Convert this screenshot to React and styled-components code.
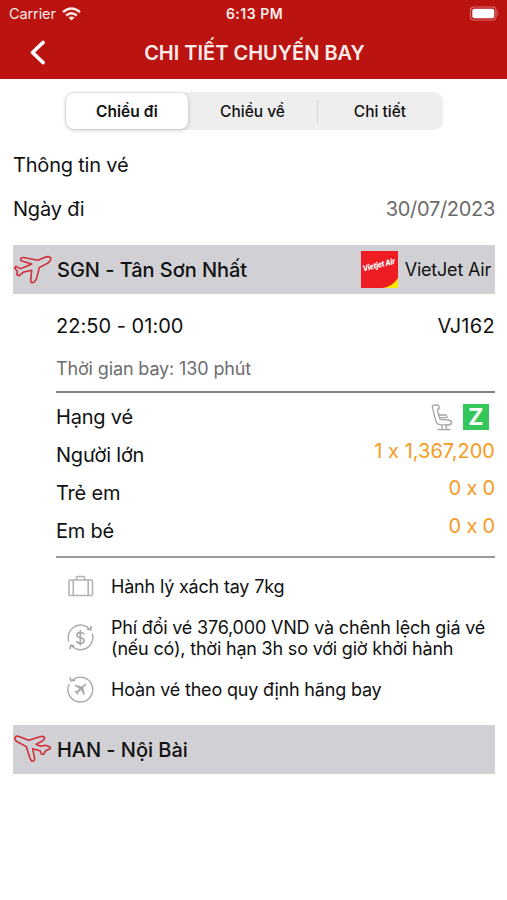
import styled, { createGlobalStyle } from "styled-components";
import { useState } from "react";

const tabs = ["Chiều đi", "Chiều về", "Chi tiết"];

const passengers = [
    { label: "Người lớn", price: "1 x 1,367,200", space: 0.02 },
    { label: "Trẻ em", price: "0 x 0", space: -0.2 },
    { label: "Em bé", price: "0 x 0", space: -0.2 },
];

export default function App(){
    const [tab, setTab] = useState(0);

    return(
    <>
        <GlobalStyle/>
        <Header>
            <StatusBar>
                <Carrier>Carrier <WifiIcon/></Carrier>
                <Clock>6:13 PM</Clock>
                <BatteryIcon/>
            </StatusBar>
            <NavBar>
                <Back aria-label="Quay lại"><BackIcon/></Back>
                <Title>CHI TIẾT CHUYẾN BAY</Title>
            </NavBar>
        </Header>
        <Tabs>
            {tabs.map((name, i) => (
                <Tab key={name} $active={tab === i} $line={tab === 0 && i === 2} onClick={() => setTab(i)}>{name}</Tab>
            ))}
        </Tabs>
        <Content>
            <Section><Text>Thông tin vé</Text></Section>
            <DateRow>
                <Text>Ngày đi</Text>
                <DateText $space={-0.3}>30/07/2023</DateText>
            </DateRow>

            <Airport>
                <DepartIcon/>
                <AirportName>SGN - Tân Sơn Nhất</AirportName>
                <Airline>
                    <VietJetLogo/>
                    <span>VietJet Air</span>
                </Airline>
            </Airport>

            <Flight>
                <TimeRow>
                    <Text $space={0.03}>22:50 - 01:00</Text>
                    <Text $space={0.3}>VJ162</Text>
                </TimeRow>
                <Duration>Thời gian bay: 130 phút</Duration>
                <Fares>
                    <FareRow>
                        <Text>Hạng vé</Text>
                        <Seat>
                            <SeatIcon/>
                            <SeatClass>Z</SeatClass>
                        </Seat>
                    </FareRow>
                    {passengers.map((p) => (
                        <FareRow key={p.label}>
                            <Text>{p.label}</Text>
                            <Price $space={p.space}>{p.price}</Price>
                        </FareRow>
                    ))}
                </Fares>
                <Conditions>
                    <Condition $height={40}>
                        <BagIcon/>
                        <p>Hành lý xách tay 7kg</p>
                    </Condition>
                    <Condition $height={62}>
                        <FeeIcon/>
                        <p>Phí đổi vé 376,000 VND và chênh lệch giá vé<br/>(nếu có), thời hạn 3h so với giờ khởi hành</p>
                    </Condition>
                    <Condition $height={42}>
                        <RefundIcon/>
                        <p>Hoàn vé theo quy định hãng bay</p>
                    </Condition>
                </Conditions>
            </Flight>

            <Airport>
                <ArriveIcon/>
                <AirportName>HAN - Nội Bài</AirportName>
            </Airport>
        </Content>
    </>
    )
}

function WifiIcon(){
    return(
        <svg width="19" height="14" viewBox="0 0 19 14" fill="none" stroke="#fbe9e8" strokeWidth="2.4">
            <path d="M1 5.2 Q9.5 -2.4 18 5.2"/>
            <path d="M4.2 8.5 Q9.5 3.8 14.8 8.5"/>
            <path d="M9.5 13.6 L6.5 10.6 Q9.5 8.2 12.5 10.6 Z" fill="#fbe9e8" stroke="none"/>
        </svg>
    )
}

function BatteryIcon(){
    return(
        <svg width="31" height="15" viewBox="0 0 31 15">
            <rect x="1.5" y="1" width="25.5" height="13" rx="3.5" fill="none" stroke="#d9706e" strokeWidth="1.2"/>
            <rect x="3.3" y="2.8" width="22" height="9.4" rx="2" fill="#fff"/>
            <path d="M28.5 5 Q30.5 7.5 28.5 10 Z" fill="#d9706e"/>
        </svg>
    )
}

function BackIcon(){
    return(
        <svg width="16" height="26" viewBox="0 0 16 26" fill="none" stroke="#fff" strokeWidth="3.8" strokeLinecap="round" strokeLinejoin="round">
            <path d="M13 2.5 L2.6 12.5 L13 22.5"/>
        </svg>
    )
}

function DepartIcon(){
    return(
        <svg width="38" height="30" viewBox="27 30 114 90" fill="none" stroke="#cf3037" strokeWidth="4.8" strokeLinejoin="round">
            <path d="M58 67 L80 57 L51 48 Q45 44 48 40 Q52 36 60 38 L99 46 L120 37 Q133 32 137 39 Q139 47 129 54 L103 68 L94 103 L87 112 Q77 116 77 107 L80 76 L54 82 L43 92 L36 90 L37 79 L29 69 L33 64 L46 71 Z"/>
        </svg>
    )
}

function ArriveIcon(){
    return(
        <svg width="38" height="30" viewBox="42 60 114 90" fill="none" stroke="#cf3037" strokeWidth="4.8" strokeLinejoin="round">
            <path d="M86 76 L120 65 Q130 62 134 68 Q135 73 127 78 L108 88 L122 94 L136 91 L149 95 Q153 99 147 103 L137 107 L131 118 L124 117 L120 107 L98 101 L104 131 Q103 141 95 138 L90 130 L79 95 L53 81 Q43 75 45 68 Q48 61 59 65 Z"/>
        </svg>
    )
}

function VietJetLogo(){
    return(
        <Logo viewBox="0 0 37 37">
            <rect width="37" height="37" fill="#ee1c23"/>
            <path d="M22 37 Q32 35 37 27 L37 37 Z" fill="#ffe800"/>
            <text x="2.5" y="20.5" transform="rotate(-14 2.5 20.5)" textLength="33" lengthAdjust="spacingAndGlyphs">Vietjet Air</text>
        </Logo>
    )
}

function SeatIcon(){
    return(
        <svg width="22" height="27" viewBox="0 0 66 81" fill="none" stroke="#a5a5a5" strokeWidth="4" strokeLinejoin="round" strokeLinecap="round">
            <path d="M4 6 Q8 2 16 3 L23 5 L25 13 L19 17 L27 46 L50 48 Q62 49 62 56 Q61 63 50 63 L25 62 Q17 60 14 49 L5 14 Z"/>
            <path d="M22 33 L44 33 Q51 36 46 41 L26 41"/>
            <path d="M33 63 L33 76 M46 63 L46 76 M21 77 L57 77"/>
        </svg>
    )
}

function BagIcon(){
    return(
        <svg width="28" height="28" viewBox="0 0 28 28" fill="none" stroke="#b0b3b3" strokeWidth="1.6">
            <rect x="2" y="7" width="23.5" height="15.5" rx="1.2"/>
            <path d="M6.3 7 V22.5 M21.2 7 V22.5 M9.5 7 V4.5 Q9.5 3.5 10.5 3.5 H16.5 Q17.5 3.5 17.5 4.5 V7"/>
        </svg>
    )
}

function FeeIcon(){
    return(
        <svg width="28" height="28" viewBox="0 0 28 28" fill="none" stroke="#a6aaaa" strokeWidth="1.4">
            <g transform="translate(-0.3 -0.5)">
                <path d="M2.2 18 A12.4 12.4 0 0 1 22.5 5"/>
                <path d="M25.6 10 A12.4 12.4 0 0 1 5.2 22.8"/>
                <path d="M20.5 5.5 L24 6.2 L24.5 2.5 M7.5 22.5 L4 21.8 L3.3 25.5" strokeWidth="1.8"/>
                <path d="M17.2 11 Q16.8 9 13.6 9 Q10.2 9 10.2 11.5 Q10.2 13.6 13.6 14.2 Q17.4 14.9 17.4 17.2 Q17.4 19.8 13.6 19.8 Q10.2 19.8 9.8 17.5 M13.6 6.5 V22.3" strokeWidth="1.6"/>
            </g>
        </svg>
    )
}

function RefundIcon(){
    return(
        <svg width="28" height="28" viewBox="0 0 28 28" fill="none" stroke="#a6aaaa" strokeWidth="1.4">
            <g transform="translate(-0.5 -1)">
                <path d="M6 5 A12.4 12.4 0 1 1 2.8 9"/>
                <path d="M3.5 2.5 L4.5 5.8 L8.5 5.2" strokeWidth="1.8"/>
                <path d="M18.8 8.4 Q20.2 8.2 19.8 9.6 L16.8 12.8 L18.3 19.5 L17.2 20.2 L14.4 15 L11.8 17.4 L11.9 19.3 L11 19.8 L9.9 17.9 L8 16.8 L8.6 16 L10.5 16 L12.9 13.6 L8 11 L8.8 9.8 L15.3 11.4 Z" fill="#a6aaaa" stroke="none"/>
            </g>
        </svg>
    )
}

const GlobalStyle = createGlobalStyle`
    * {
        box-sizing: border-box;
    }
    body {
        margin: 0;
        background: #fff;
        color: #111;
        font-family: Inter, "Liberation Sans", sans-serif;
        font-size: 20px;
    }
    svg {
        display: block;
        flex-shrink: 0;
    }
    button {
        padding: 0;
        border: 0;
        background: none;
        font-family: inherit;
    }
    p {
        margin: 0;
    }
`
const Header = styled.header`
    height: 79px;
    background: #bb1310;
    color: #fdecea;
`
const StatusBar = styled.div`
    height: 27px;
    padding: 0 7px 0 9px;
    display: grid;
    grid-template-columns: 1fr auto 1fr;
    align-items: center;
    font-size: 14.5px;

    > svg {
        justify-self: end;
    }
`
const Carrier = styled.div`
    display: flex;
    align-items: center;
    gap: 6px;
    letter-spacing: -0.1px;
`
const Clock = styled.div`
    font-weight: 600;
    font-size: 14px;
    letter-spacing: 0.5px;
`
const NavBar = styled.div`
    height: 51px;
    padding: 0 28px 0 30px;
    display: grid;
    grid-template-columns: 16px 1fr 16px;
    align-items: center;
`
const Back = styled.button`
    width: 16px;
`
const Title = styled.h1`
    margin: 0;
    text-align: center;
    font-size: 20px;
    font-weight: 600;
`
const Tabs = styled.div`
    width: 378px;
    height: 38px;
    margin: 13px 0 0 65px;
    padding: 1px;
    display: grid;
    grid-template-columns: 122px 129px 125px;
    align-items: center;
    background: #eeeeef;
    border-radius: 9px;
`
const Tab = styled.button`
    height: ${({ $active }) => $active ? "36px" : "23px"};
    font-size: 15.5px;
    font-weight: ${({ $active }) => $active ? 600 : 500};
    color: #111;
    background: ${({ $active }) => $active ? "#fff" : "none"};
    border-radius: ${({ $active }) => $active ? "8px" : "0"};
    border-left: ${({ $line }) => $line ? "1px solid #d5d5d7" : "0"};
    box-shadow: ${({ $active }) => $active ? "0 1px 4px rgba(0,0,0,0.22)" : "none"};
`
const Content = styled.main`
    padding: 12px 12px 0 13px;
`
const Text = styled.span`
    letter-spacing: ${({ $space }) => $space ?? -0.2}px;
`
const Section = styled.div`
    height: 45px;
    display: flex;
    align-items: center;
`
const DateRow = styled.div`
    height: 58px;
    padding-bottom: 14px;
    display: flex;
    justify-content: space-between;
    align-items: center;
`
const DateText = styled(Text)`
    color: #6b6b6b;
`
const Airport = styled.div`
    height: 49px;
    padding: 0 4px 0 1px;
    display: flex;
    align-items: center;
    background: #d1d0d5;
`
const AirportName = styled.div`
    margin-left: 5px;
    font-weight: 500;
    letter-spacing: -0.04px;
`
const Airline = styled.div`
    margin-left: auto;
    display: flex;
    align-items: center;
    gap: 7px;
    font-size: 18px;
    letter-spacing: -0.2px;
`
const Logo = styled.svg`
    width: 37px;
    height: 37px;
    overflow: visible;

    text {
        font-size: 8px;
        font-weight: 800;
        font-style: italic;
        fill: #fff;
    }
`
const Flight = styled.div`
    padding-left: 43px;
`
const TimeRow = styled.div`
    height: 64px;
    display: flex;
    justify-content: space-between;
    align-items: center;
`
const Duration = styled.div`
    height: 33px;
    line-height: 21px;
    font-size: 18px;
    letter-spacing: -0.13px;
    color: #6d6d6d;
`
const Fares = styled.div`
    height: 167px;
    padding-top: 5.5px;
    border-top: 2px solid #848484;
    border-bottom: 2px solid #999;
`
const FareRow = styled.div`
    height: 37.8px;
    display: flex;
    justify-content: space-between;
    align-items: center;
`
const Seat = styled.div`
    padding-right: 6px;
    display: flex;
    align-items: center;
    gap: 10px;
`
const SeatClass = styled.div`
    width: 26px;
    height: 26px;
    display: flex;
    align-items: center;
    justify-content: center;
    background: #35c759;
    color: #fff;
    font-size: 23px;
    font-weight: 700;
`
const Price = styled(Text)`
    padding-bottom: 9px;
    color: #f59a23;
`
const Conditions = styled.div`
    padding: 9px 0 14px 11px;
`
const Condition = styled.div`
    height: ${({ $height }) => $height}px;
    display: flex;
    align-items: center;
    gap: 16px;
    font-size: 18px;
    line-height: 21.5px;
    letter-spacing: -0.19px;
    white-space: nowrap;
`
